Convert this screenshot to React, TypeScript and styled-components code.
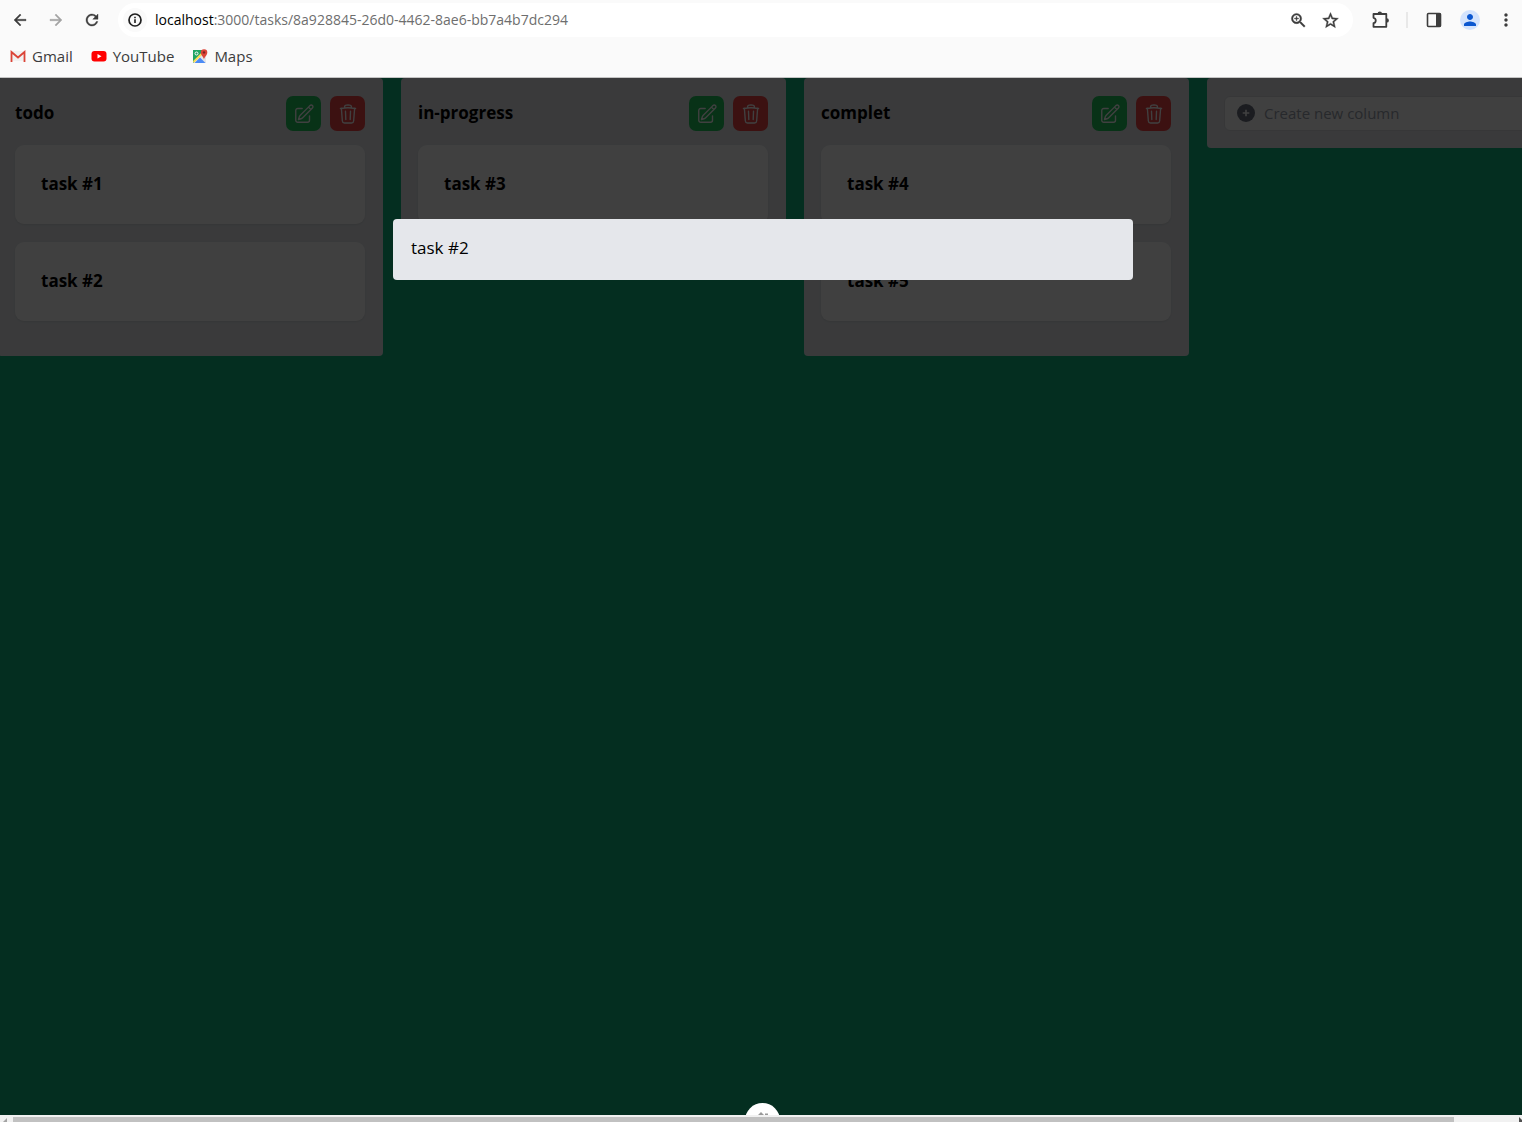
import React from "react";
import styled, { createGlobalStyle } from "styled-components";
import { HiOutlinePencilSquare, HiOutlineTrash } from "react-icons/hi2";
import {
  MdArrowBack,
  MdArrowForward,
  MdRefresh,
  MdZoomIn,
  MdStarOutline,
  MdPerson,
  MdMoreVert,
} from "react-icons/md";

const GlobalStyle = createGlobalStyle`
  *, *::before, *::after { box-sizing: border-box; }
  body {
    margin: 0;
    font-family: "Open Sans", "Noto Sans", sans-serif;
    color: #000;
  }
  button, input { font: inherit; color: inherit; }
  button { padding: 0; border: 0; background: none; cursor: pointer; }
  h2, h3, p, ul { margin: 0; padding: 0; font-size: inherit; }
`;

const Window = styled.div`
  display: flex;
  flex-direction: column;
  height: 100vh;
  overflow: hidden;
`;

const Chrome = styled.header`
  flex: none;
  background: #fafafa;
  border-bottom: 1px solid #c4c4c4;
`;

const Toolbar = styled.div`
  display: flex;
  align-items: center;
  height: 40px;
  padding-left: 8px;
`;

const NavGroup = styled.nav`
  display: flex;
  gap: 12px;
  margin-right: 14px;
`;

const IconButton = styled.button<{ $tone?: string; $bold?: boolean }>`
  display: grid;
  place-items: center;
  width: 24px;
  height: 24px;
  flex: none;
  color: ${(p) => p.$tone ?? "#3c3c3c"};

  path:not([fill="none"]) {
    stroke-width: ${(p) => (p.$bold ? 0.5 : 0)};
  }
`;

const AddressBar = styled.div`
  display: flex;
  align-items: center;
  flex: 1;
  height: 34px;
  padding: 0 11px 0 5px;
  gap: 8px;
  border-radius: 17px;
  background: #fff;
`;

const LineIconButton = styled.button`
  display: grid;
  place-items: center;
  width: 24px;
  height: 24px;
  flex: none;
  color: #3c3c3c;
`;

const SiteInfo = styled(LineIconButton)`
  border-radius: 50%;
  background: #fafafa;
  color: #1f1f1f;
`;

const Url = styled.p`
  flex: 1;
  font-size: 14px;
  line-height: 20px;
  color: #6e6e6e;
  white-space: nowrap;
`;

const Host = styled.span`
  color: #000;
`;

const ToolGroup = styled.div`
  display: flex;
  align-items: center;
  gap: 12px;
  padding: 0 4px 0 15px;
`;

const AddressTools = styled.div`
  display: flex;
  gap: 8px;
`;

const Divider = styled.span`
  width: 2px;
  height: 16px;
  margin: 0 2px;
  background: #e8e8e8;
`;

const Avatar = styled(IconButton)`
  width: 20px;
  height: 20px;
  margin: 0 2px;
  border-radius: 50%;
  background: #d3e3fd;
  color: #0b57d0;
`;

const Bookmarks = styled.nav`
  display: flex;
  gap: 18px;
  height: 37px;
  padding: 0 10px 5px;
  align-items: center;
`;

const Bookmark = styled.a`
  display: flex;
  align-items: center;
  gap: 6px;
  font-size: 15px;
  line-height: 20px;
  color: #3c3c3c;
  text-decoration: none;
`;

const Page = styled.main`
  position: relative;
  flex: 1;
  overflow: hidden;
  background: #10b981;
`;

const Board = styled.div`
  display: flex;
  align-items: flex-start;
  gap: 18px;
  margin-left: -2px;
`;

const Column = styled.section`
  flex: none;
  width: 385px;
  padding: 18px 18px 35px 17px;
  border-radius: 4px;
  background: #e5e7eb;
`;

const NewColumn = styled(Column)`
  padding-bottom: 17px;
`;

const ColumnHeader = styled.header`
  display: flex;
  align-items: center;
  gap: 9px;
  margin-bottom: 14px;
`;

const ColumnTitle = styled.h2`
  flex: 1;
  padding-bottom: 2px;
  font-size: 17px;
  line-height: 26px;
  font-weight: 700;
`;

const ActionButton = styled.button<{ $color: string }>`
  display: grid;
  place-items: center;
  width: 35px;
  height: 35px;
  border-radius: 7px;
  background: ${(p) => p.$color};
  color: #fff;
`;

const TaskList = styled.ul`
  display: flex;
  flex-direction: column;
  gap: 18px;
  list-style: none;
`;

const Task = styled.li`
  padding: 25px 26px 27px;
  border-radius: 9px;
  background: #fff;
  box-shadow: 0 1px 2px rgba(0, 0, 0, 0.08);
  font-size: 17px;
  line-height: 27px;
  font-weight: 700;
`;

const CreateField = styled.label`
  display: flex;
  align-items: center;
  gap: 9px;
  height: 35px;
  padding: 0 12px 1px;
  border: 1px solid #d9dbdf;
  border-radius: 6px;
  background: #fff;
  color: #6b7280;
`;

const CreateInput = styled.input`
  flex: 1;
  min-width: 0;
  padding: 0;
  border: 0;
  outline: 0;
  background: none;
  font-size: 15px;
  line-height: 22px;
  &::placeholder { color: #9ca3af; opacity: 1; }
`;

/* Dimmed layer that covers the board while a task is open. */
const Backdrop = styled.div`
  position: absolute;
  inset: 0;
  display: flex;
  flex-direction: column;
  align-items: center;
  padding: 141px 0 0 4px;
  background: rgba(0, 0, 0, 0.75);
`;

const Dialog = styled.div`
  width: 740px;
  max-width: 90%;
  padding: 15px 18px 19px;
  border-radius: 4px;
  background: #e5e7eb;
  font-size: 17px;
  line-height: 27px;
`;

const DevBadge = styled.button`
  position: absolute;
  bottom: -23px;
  left: calc(50% + 2px);
  margin-left: -18px;
  display: grid;
  justify-items: center;
  align-content: start;
  width: 35px;
  height: 35px;
  padding-top: 8px;
  border-radius: 50%;
  background: #fff;
  color: #999;
`;

const Scrollbar = styled.div`
  flex: none;
  display: grid;
  grid-template-columns: 13px 1fr 68px;
  height: 7px;
  padding-top: 2px;
  background: #f1f1f1;
`;

const Thumb = styled.div`
  background: #c1c1c1;
`;

const Arrow = styled.svg<{ $end?: boolean }>`
  display: block;
  justify-self: ${(p) => (p.$end ? "end" : "start")};
`;

const GmailLogo = () => (
  <svg width="16" height="16" viewBox="0 0 16 16" aria-hidden="true">
    <path d="M2 3h12v10H2z" fill="#f1f1f1" />
    <path d="M1.500 14V4L8 9.500 14.500 4v10" fill="none" stroke="#db4437" strokeWidth="1.800" />
  </svg>
);

const YouTubeLogo = () => (
  <svg width="16" height="16" viewBox="0 0 16 16" aria-hidden="true">
    <rect x="0.5" y="3" width="15" height="10.5" rx="3" fill="#f00" />
    <path d="M6.5 6v4.5l4-2.25z" fill="#fff" />
  </svg>
);

const MapsLogo = () => (
  <svg width="16" height="16" viewBox="0 0 16 16" aria-hidden="true">
    <path d="M1 2h13v13H1z" fill="#e4e6e8" />
    <path d="M1 2h10v3L1 15z" fill="#1fa463" />
    <path d="M2.500 15L8 9.500l5.500 5.500z" fill="#4c8bf5" />
    <path d="M1.500 14L11.500 4" stroke="#fddc55" strokeWidth="1.800" />
    <circle cx="4.500" cy="5.500" r="1.500" fill="none" stroke="#fff" />
    <path d="M12 11.500c0-2.500-3.200-3.900-3.200-7.100a3.200 3.200 0 0 1 6.500 0c0 3.200-3.300 4.600-3.300 7.100z" fill="#db4437" />
    <circle cx="12" cy="4.400" r="1.200" fill="#7b231e" />
  </svg>
);

const InfoIcon = () => (
  <svg width="16" height="16" viewBox="0 0 16 16" aria-hidden="true">
    <circle cx="8" cy="8" r="6" fill="none" stroke="currentColor" strokeWidth="1.700" />
    <path d="M8 7.300v3.700M8 4.800v1.500" stroke="currentColor" strokeWidth="1.600" />
  </svg>
);

const ExtensionIcon = () => (
  <svg width="18" height="18" viewBox="0 0 18 18" aria-hidden="true">
    <path
      d="M2.500 3h12.800v12.800H2.500v-3.600c3-.6 3-4.800 0-5.400z"
      fill="none"
      stroke="currentColor"
      strokeWidth="1.800"
      strokeLinejoin="round"
    />
    <path d="M6.600 2.600a2.200 2.200 0 0 1 4.400 0zM15.700 7.200a2.200 2.200 0 0 1 0 4.400z" fill="currentColor" />
  </svg>
);

const SidePanelIcon = () => (
  <svg width="16" height="16" viewBox="0 0 16 16" aria-hidden="true">
    <rect x="1.500" y="1.500" width="13" height="13" rx="1" fill="none" stroke="currentColor" strokeWidth="1.600" />
    <path d="M10 1h4.500v14H10z" fill="currentColor" />
  </svg>
);

const PlusCircle = () => (
  <svg width="18" height="18" viewBox="0 0 18 18" aria-hidden="true">
    <circle cx="9" cy="9" r="9" fill="currentColor" />
    <path d="M9 5.700v6.600M5.700 9h6.600" stroke="#fff" strokeWidth="1.600" />
  </svg>
);

const columns = [
  { title: "todo", tasks: ["task #1", "task #2"] },
  { title: "in-progress", tasks: ["task #3"] },
  { title: "complet", tasks: ["task #4", "task #5"] },
];

export default function App() {
  return (
    <Window>
      <GlobalStyle />
      <Chrome>
        <Toolbar>
          <NavGroup>
            <IconButton $bold aria-label="Back"><MdArrowBack size={18} /></IconButton>
            <IconButton $bold aria-label="Forward" $tone="#a3a3a3"><MdArrowForward size={18} /></IconButton>
            <IconButton $bold aria-label="Reload"><MdRefresh size={18} /></IconButton>
          </NavGroup>
          <AddressBar>
            <SiteInfo aria-label="Site information"><InfoIcon /></SiteInfo>
            <Url><Host>localhost</Host>:3000/tasks/8a928845-26d0-4462-8ae6-bb7a4b7dc294</Url>
            <AddressTools>
              <IconButton $bold aria-label="Zoom"><MdZoomIn size={19} /></IconButton>
              <IconButton $bold aria-label="Bookmark"><MdStarOutline size={19} /></IconButton>
            </AddressTools>
          </AddressBar>
          <ToolGroup>
            <LineIconButton aria-label="Extensions"><ExtensionIcon /></LineIconButton>
            <Divider />
            <LineIconButton aria-label="Side panel"><SidePanelIcon /></LineIconButton>
            <Avatar aria-label="Profile"><MdPerson size={18} /></Avatar>
            <IconButton aria-label="Menu"><MdMoreVert size={20} /></IconButton>
          </ToolGroup>
        </Toolbar>
        <Bookmarks>
          <Bookmark href="#gmail"><GmailLogo />Gmail</Bookmark>
          <Bookmark href="#youtube"><YouTubeLogo />YouTube</Bookmark>
          <Bookmark href="#maps"><MapsLogo />Maps</Bookmark>
        </Bookmarks>
      </Chrome>
      <Page>
        <Board>
          {columns.map((column) => (
            <Column key={column.title}>
              <ColumnHeader>
                <ColumnTitle>{column.title}</ColumnTitle>
                <ActionButton $color="#22c55e" aria-label="Edit column"><HiOutlinePencilSquare size={22} /></ActionButton>
                <ActionButton $color="#ef4444" aria-label="Delete column"><HiOutlineTrash size={22} /></ActionButton>
              </ColumnHeader>
              <TaskList>
                {column.tasks.map((task) => <Task key={task}>{task}</Task>)}
              </TaskList>
            </Column>
          ))}
          <NewColumn>
            <CreateField>
              <PlusCircle />
              <CreateInput aria-label="Create new column" placeholder="Create new column" />
            </CreateField>
          </NewColumn>
        </Board>
        <Backdrop>
          <Dialog role="dialog" aria-label="task #2">task #2</Dialog>
        </Backdrop>
        <DevBadge aria-label="Open tools">
          <svg width="16" height="8" viewBox="0 0 16 8" aria-hidden="true">
            <path d="M3 4l3-3 3 3zM10 2.500h3V4h-3z" fill="currentColor" />
          </svg>
        </DevBadge>
      </Page>
      <Scrollbar aria-hidden="true">
        <Arrow width="8" height="5" viewBox="0 0 8 5"><path d="M3 5l4-4v4z" fill="#a3a3a3" /></Arrow>
        <Thumb />
        <Arrow $end width="3" height="5" viewBox="0 0 3 5"><path d="M0 0l3 3v2H0z" fill="#505050" /></Arrow>
      </Scrollbar>
    </Window>
  );
}
